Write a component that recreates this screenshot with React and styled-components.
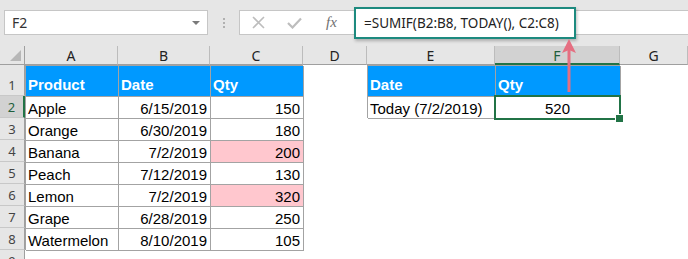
import React from 'react';
import styled, { createGlobalStyle, css } from 'styled-components';

const GlobalStyle = createGlobalStyle`
	html, body {
		margin: 0;
		padding: 0;
		background: #fff;
		overflow: hidden;
	}
	* {
		box-sizing: border-box;
	}
`;

const GRID_LINE = '#a3a3a3';
const GREEN = '#217346';

const Page = styled.div`
	position: relative;
	width: 688px;
	height: 259px;
	overflow: hidden;
	font-family: "Liberation Sans", Arial, sans-serif;
`;

const Toolbar = styled.div`
	display: flex;
	align-items: flex-start;
	height: 46px;
	padding-top: 10px;
	background: #e6e6e6;
`;

const NameBox = styled.div`
	display: flex;
	align-items: center;
	justify-content: space-between;
	width: 204px;
	height: 25px;
	margin-left: 4px;
	padding: 0 7px 0 7px;
	background: #fff;
	border: 1px solid #c6c6c6;
	font-family: "Noto Sans", sans-serif;
	font-size: 14px;
	color: #333;
`;

const DropArrow = styled.span`
	width: 0;
	height: 0;
	border-left: 4px solid transparent;
	border-right: 4px solid transparent;
	border-top: 4px solid #7a7a7a;
`;

const Dots = styled.div`
	display: flex;
	flex-direction: column;
	align-items: center;
	justify-content: center;
	gap: 2px;
	width: 31px;
	height: 25px;

	span {
		width: 2px;
		height: 2px;
		background: #b0b0b0;
	}
`;

const FormulaBar = styled.div`
	flex: 1;
	display: flex;
	align-items: center;
	height: 25px;
	background: #fff;
	border: 1px solid #c6c6c6;
	border-right: none;
`;

const BarIcons = styled.div`
	display: flex;
	align-items: center;
	width: 114px;
	padding-left: 12px;
	gap: 22px;
	color: #b8b8b8;
`;

const Fx = styled.span`
	font-family: "Liberation Serif", serif;
	font-style: italic;
	font-size: 15px;
	color: #707070;
	margin-left: 2px;
`;

const FormulaBox = styled.div`
	display: flex;
	align-items: center;
	width: 222px;
	height: 32px;
	padding-left: 8px;
	background: #fff;
	border: 2px solid #1d8a7f;
	box-shadow: 1px 2px 3px rgba(0, 0, 0, 0.25);
	font-family: "Noto Sans", sans-serif;
	font-size: 13.5px;
	color: #222;
	white-space: nowrap;
`;

const Sheet = styled.div`
	display: grid;
	grid-template-columns: 25px 93px 92px 93px 64px 128px 125px 68px;
	grid-template-rows: 19px 31px repeat(8, 22px);
	background: #fff;
`;

const Corner = styled.div`
	position: relative;
	background: #e6e6e6;
	border-right: 1px solid #9f9f9f;
	border-bottom: 1px solid #9f9f9f;

	&::after {
		content: '';
		position: absolute;
		right: 3px;
		bottom: 3px;
		width: 0;
		height: 0;
		border-left: 11px solid transparent;
		border-bottom: 11px solid #b7b7b7;
	}
`;

const ColHead = styled.div`
	display: flex;
	align-items: center;
	justify-content: center;
	background: ${p => (p.$active ? '#d2d2d2' : '#e6e6e6')};
	border-right: 1px solid #bcbcbc;
	border-bottom: ${p => (p.$active ? `2px solid ${GREEN}` : '1px solid #9f9f9f')};
	font-family: "Noto Sans", sans-serif;
	font-size: 14px;
	color: ${p => (p.$active ? '#1f5f3c' : '#222')};
	padding-top: 1px;
`;

const RowHead = styled.div`
	display: flex;
	align-items: flex-end;
	justify-content: center;
	padding-bottom: 1px;
	background: ${p => (p.$active ? '#d2d2d2' : '#e6e6e6')};
	border-right: ${p => (p.$active ? `2px solid ${GREEN}` : '1px solid #9f9f9f')};
	border-bottom: 1px solid #c8c8c8;
	font-family: "Noto Sans", sans-serif;
	font-size: 13px;
	line-height: 18px;
	color: ${p => (p.$active ? '#1f5f3c' : '#444')};
`;

const fills = {
	blue: '#0099ff',
	pink: '#ffc7ce',
};

const Cell = styled.div`
	position: relative;
	display: flex;
	align-items: flex-end;
	justify-content: ${p => (p.$align === 'right' ? 'flex-end' : p.$align === 'center' ? 'center' : 'flex-start')};
	padding: 0 3px 1px 3px;
	font-size: 15px;
	line-height: 17px;
	white-space: nowrap;
	color: ${p => (p.$fill === 'blue' ? '#fff' : '#000')};
	font-weight: ${p => (p.$fill === 'blue' ? 700 : 400)};
	background: ${p => (p.$fill ? fills[p.$fill] : 'transparent')};
	${p =>
		p.$boxed &&
		css`
			box-shadow: 1px 1px 0 0 ${GRID_LINE}, inset 1px 1px 0 0 ${GRID_LINE};
		`}
	${p =>
		p.$fill === 'blue' &&
		css`
			padding-bottom: 3px;
		`}
	${p =>
		p.$selected &&
		css`
			z-index: 2;
			&::after {
				content: '';
				position: absolute;
				left: -1px;
				top: -1px;
				right: -1px;
				bottom: -2px;
				border: 2px solid ${GREEN};
			}
			&::before {
				content: '';
				position: absolute;
				right: -4px;
				bottom: -5px;
				width: 7px;
				height: 7px;
				background: ${GREEN};
				border: 1px solid #fff;
				z-index: 3;
			}
		`}
`;

const Arrow = styled.svg`
	position: absolute;
	left: 561px;
	top: 38px;
	z-index: 5;
`;

const columns = ['A', 'B', 'C', 'D', 'E', 'F', 'G'];

const fruits = [
	['Apple', '6/15/2019', '150'],
	['Orange', '6/30/2019', '180'],
	['Banana', '7/2/2019', '200', true],
	['Peach', '7/12/2019', '130'],
	['Lemon', '7/2/2019', '320', true],
	['Grape', '6/28/2019', '250'],
	['Watermelon', '8/10/2019', '105'],
];

const Empty = () => <Cell />;

export default function App() {
	return (
		<Page>
			<GlobalStyle />
			<Toolbar>
				<NameBox>
					<span>F2</span>
					<DropArrow />
				</NameBox>
				<Dots>
					<span />
					<span />
					<span />
				</Dots>
				<FormulaBar>
					<BarIcons>
						<svg width="13" height="13" viewBox="0 0 13 13">
							<path d="M1 1 L12 12 M12 1 L1 12" stroke="#bdbdbd" strokeWidth="1.6" fill="none" />
						</svg>
						<svg width="15" height="12" viewBox="0 0 15 12">
							<path d="M1 6 L5.5 10.5 L14 1.5" stroke="#bdbdbd" strokeWidth="2.2" fill="none" />
						</svg>
						<Fx>fx</Fx>
					</BarIcons>
					<FormulaBox>=SUMIF(B2:B8, TODAY(), C2:C8)</FormulaBox>
				</FormulaBar>
			</Toolbar>

			<Sheet>
				<Corner />
				{columns.map(c => (
					<ColHead key={c} $active={c === 'F'}>
						{c}
					</ColHead>
				))}

				<RowHead>1</RowHead>
				<Cell $boxed $fill="blue">Product</Cell>
				<Cell $boxed $fill="blue">Date</Cell>
				<Cell $boxed $fill="blue">Qty</Cell>
				<Empty />
				<Cell $boxed $fill="blue">Date</Cell>
				<Cell $boxed $fill="blue">Qty</Cell>
				<Empty />

				{fruits.map(([name, date, qty, hit], i) => (
					<React.Fragment key={name}>
						<RowHead $active={i === 0}>{i + 2}</RowHead>
						<Cell $boxed>{name}</Cell>
						<Cell $boxed $align="right">{date}</Cell>
						<Cell $boxed $align="right" $fill={hit ? 'pink' : undefined}>
							{qty}
						</Cell>
						<Empty />
						{i === 0 ? (
							<>
								<Cell $boxed>Today (7/2/2019)</Cell>
								<Cell $boxed $align="center" $selected>
									520
								</Cell>
							</>
						) : (
							<>
								<Empty />
								<Empty />
							</>
						)}
						<Empty />
					</React.Fragment>
				))}

				<RowHead>9</RowHead>
			</Sheet>

			<Arrow width="16" height="56" viewBox="0 0 16 56">
				<path d="M6.5 12 L6.5 54 L9.5 54 L9.5 12 Z" fill="#e56f82" />
				<path d="M8 1 L15 15 L8 12 L1 15 Z" fill="#e56f82" />
			</Arrow>
		</Page>
	);
}
